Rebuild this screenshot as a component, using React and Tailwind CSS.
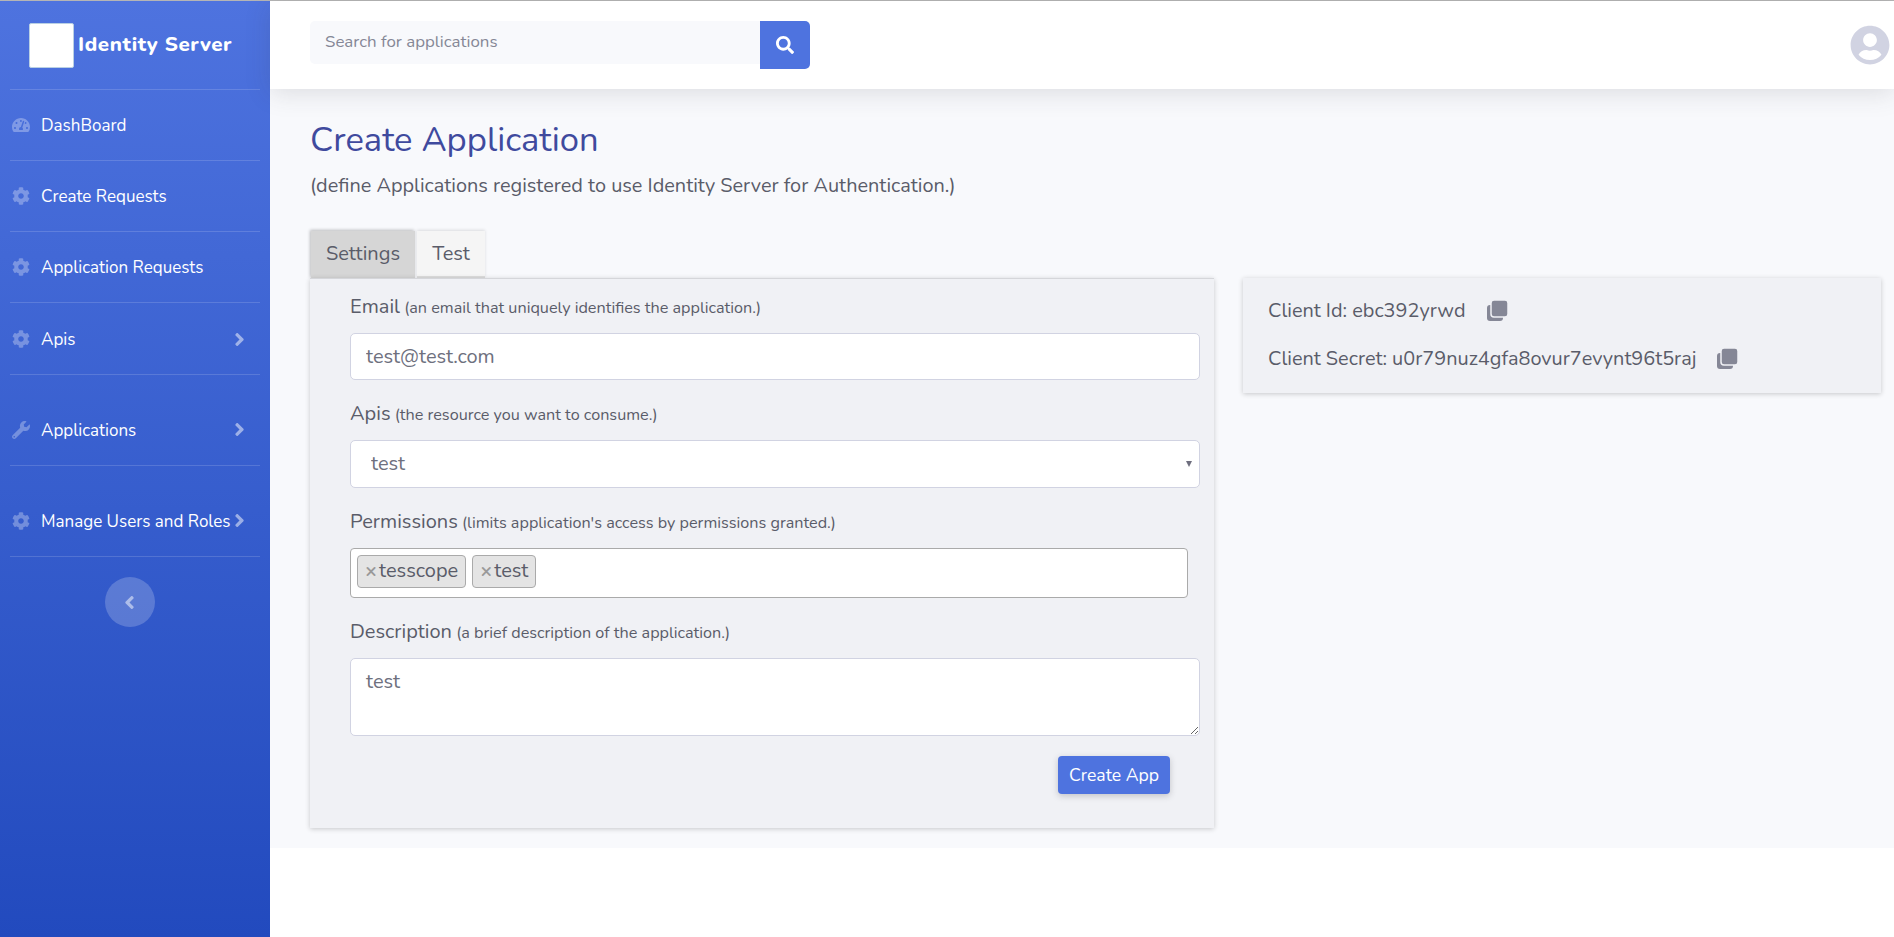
import { FaTachometerAlt, FaCog, FaWrench, FaAngleRight, FaAngleLeft, FaSearch, FaUserCircle } from "react-icons/fa";

const navItems = [
  { label: "DashBoard", icon: FaTachometerAlt, row: "h-[70px]" },
  { label: "Create Requests", icon: FaCog, row: "h-[70px]" },
  { label: "Application Requests", icon: FaCog, row: "h-[70px]" },
  { label: "Apis", icon: FaCog, row: "h-[71px] pt-[1px]", arrow: true },
  { label: "Applications", icon: FaWrench, row: "h-[90px] pt-[19px]", arrow: true },
  { label: "Manage Users and Roles", icon: FaCog, row: "h-[90px] pt-[19px]", arrow: true },
];

function Sidebar() {
  return (
    <aside className="w-[270px] shrink-0 bg-gradient-to-b from-[#4e73df] to-[#224abe] flex flex-col">
      {/* Brand */}
      <div className="h-[88px] flex items-center pl-[29px]">
        <div className="w-[45px] h-[45px] bg-white rounded-[2px] border border-[#b9d0e4] mt-[1px]"></div>
        <span className="ml-[4px] mb-[2px] text-white font-extrabold text-[20.5px] tracking-[0.6px] leading-none">Identity Server</span>
      </div>
      <div className="mx-[10px] border-t border-white/15"></div>

      {/* Nav */}
      {navItems.map((item) => {
        const Icon = item.icon;
        return (
          <div key={item.label}>
            <div className={`${item.row} flex items-center pl-[12px] pr-[25px]`}>
              <Icon className="w-[18px] h-[18px] text-white/30 shrink-0" />
              <span className="ml-[11px] pt-[2px] text-white text-[17px] whitespace-nowrap">{item.label}</span>
              {item.arrow && <FaAngleRight className="w-[11px] h-[21px] text-white/50 ml-auto shrink-0" />}
            </div>
            <div className="mx-[10px] border-t border-white/15"></div>
          </div>
        );
      })}

      <button className="w-[50px] h-[50px] rounded-full bg-white/20 self-center mt-[20px] ml-[-10px] flex items-center justify-center">
        <FaAngleLeft className="w-[11px] h-[21px] text-white/50 mr-[1px]" />
      </button>
    </aside>
  );
}

function Topbar() {
  return (
    <header className="h-[88px] bg-white shadow-[0_4px_24px_rgba(58,59,69,0.15)] relative z-10 flex items-center pl-[40px] pr-[4px]">
      <div className="flex items-start">
        <input
          readOnly
          placeholder="Search for applications"
          className="w-[450px] h-[43px] bg-[#f8f9fc] rounded-l-[5px] pl-[15px] pb-[2px] text-[16.9px] text-[#6e707e] placeholder:text-[#858796] outline-none"
        />
        <button className="w-[50px] h-[48px] bg-[#4e73df] rounded-r-[5px] flex items-center justify-center">
          <FaSearch className="w-[18px] h-[18px] text-white" />
        </button>
      </div>
      <FaUserCircle className="ml-auto w-[40px] h-[40px] text-[#d1d3e2]" />
    </header>
  );
}

function Field({ label, hint, children }) {
  return (
    <div>
      <label className="block mb-[11px] text-[#5a5c69] text-[20px] leading-[30px]">
        {label}<span className="text-[16.2px] leading-none"> {hint}</span>
      </label>
      {children}
    </div>
  );
}

function Tag({ text }) {
  return (
    <span className="h-[33px] flex items-center bg-[#e4e4e4] border border-[#aaa] rounded-[4px] px-[7px] pb-[2px] text-[20px] text-[#5a5c69]">
      <span className="text-[#999] font-bold mr-[2px]">×</span>
      {text}
    </span>
  );
}

function CopyIcon() {
  return (
    <svg viewBox="0 0 21 21" className="w-[21px] h-[21px] ml-[21px] shrink-0">
      <rect x="0" y="5" width="16" height="16" rx="3" fill="#858796" />
      <rect x="4" y="0" width="17" height="17" rx="3" fill="#858796" stroke="#f0f1f5" strokeWidth="1.5" />
    </svg>
  );
}

function CopyRow({ text }) {
  return (
    <div className="flex items-center text-[#5a5c69] text-[19.9px] h-[27px]">
      <span>{text}</span>
      <CopyIcon />
    </div>
  );
}

export default function App() {
  const inputClass = "block w-[850px] bg-white border border-[#d1d3e2] rounded-[5px] px-[15px] text-[20px] text-[#6e707e] outline-none";

  return (
    <div className="flex min-h-[937px] bg-white border-t border-[#b5b5b5] font-['Nunito','Open_Sans',sans-serif]">
      <Sidebar />

      <div className="flex-1 min-w-0">
        <Topbar />

        <main className="h-[759px] bg-[#f8f9fc] pl-[40px] pr-[13px]">
          <h1 className="pt-[28px] text-[34.6px] leading-[46px] text-[#3f4a9e]">Create Application</h1>
          <p className="mt-[9px] text-[19.9px] leading-[27px] text-[#5a5c69]">
            (define Applications registered to use Identity Server for Authentication.)
          </p>

          {/* Tabs */}
          <div className="flex mt-[32px] ml-[1px] text-[20px] text-[#5a5c69]">
            <div className="w-[104px] h-[47px] pb-[2px] flex items-center justify-center bg-[#d6d6d6] shadow-[-1px_-1px_3px_rgba(0,0,0,0.25)]">Settings</div>
            <div className="w-[68px] h-[47px] ml-[2px] flex items-center justify-center bg-[#f5f5f5] shadow-[0_-1px_3px_rgba(0,0,0,0.12)] border-b-2 border-[#ddd]">Test</div>
          </div>

          <div className="flex items-start gap-[29px]">
            {/* Form */}
            <section className="w-[904px] h-[550px] bg-[#f0f1f5] border-t border-[#d5d6da] shadow-[0_1px_5px_rgba(0,0,0,0.2)] pl-[40px] pt-[13px]">
              <Field label="Email" hint="(an email that uniquely identifies the application.)">
                <input readOnly value="test@test.com" className={`${inputClass} h-[47px]`} />
              </Field>

              <div className="mt-[19px]">
                <Field label="Apis" hint="(the resource you want to consume.)">
                  <div className="relative w-[850px]">
                    <select className={`${inputClass} h-[48px] appearance-none !pl-[20px]`}>
                      <option>test</option>
                    </select>
                    <span className="absolute right-[8px] top-[21px] w-0 h-0 border-x-[3.5px] border-x-transparent border-t-[6px] border-t-[#6e6e7e]"></span>
                  </div>
                </Field>
              </div>

              <div className="mt-[19px]">
                <Field label="Permissions" hint="(limits application's access by permissions granted.)">
                  <div className="w-[838px] h-[50px] bg-white border border-[#aaa] rounded-[4px] flex items-start gap-[6px] pl-[6px] pt-[6px]">
                    <Tag text="tesscope" />
                    <Tag text="test" />
                  </div>
                </Field>
              </div>

              <div className="mt-[19px]">
                <Field label="Description" hint="(a brief description of the application.)">
                  <textarea readOnly value="test" className={`${inputClass} h-[78px] py-[8px]`} />
                </Field>
              </div>

              <div className="flex justify-end w-[820px] mt-[20px]">
                <button className="w-[112px] h-[38px] bg-[#4e73df] text-white text-[17.6px] rounded-[4px] shadow-[0_2px_6px_rgba(58,59,69,0.25)]">
                  Create App
                </button>
              </div>
            </section>

            {/* Credentials */}
            <section className="flex-1 h-[115px] bg-[#f0f1f5] shadow-[0_1px_5px_rgba(0,0,0,0.2)] pl-[25px] pt-[19px] flex flex-col gap-[21px]">
              <CopyRow text="Client Id: ebc392yrwd" />
              <CopyRow text="Client Secret: u0r79nuz4gfa8ovur7evynt96t5raj" />
            </section>
          </div>
        </main>
      </div>
    </div>
  );
}
